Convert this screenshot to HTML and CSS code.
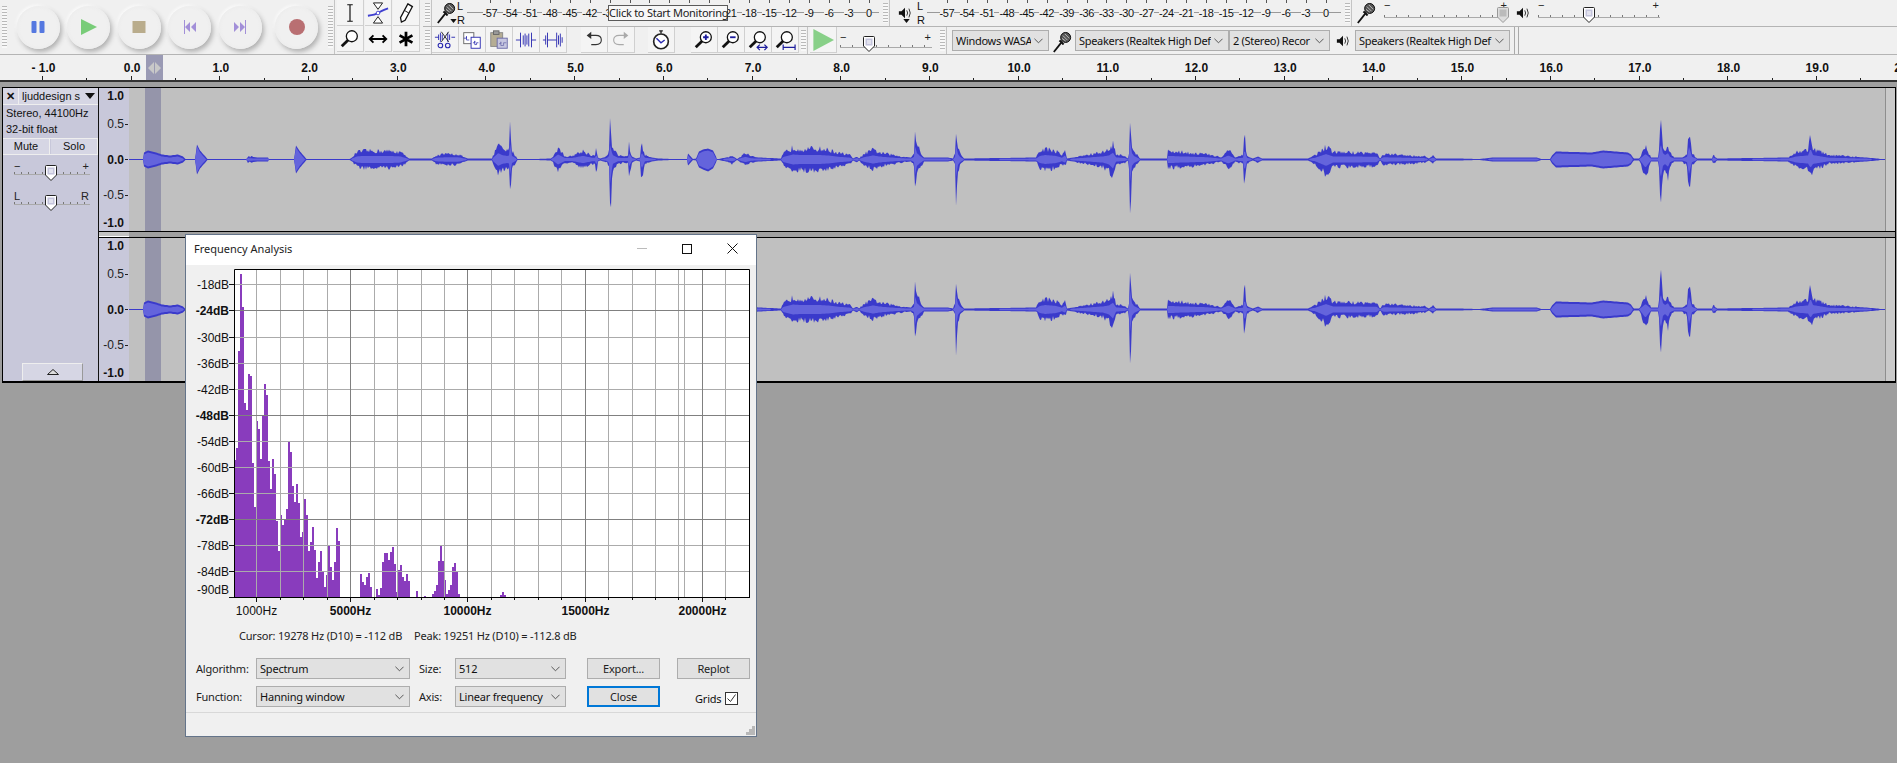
FILE: index.html
```html
<!DOCTYPE html>
<html lang="en">
<head>
<meta charset="utf-8">
<title>Audacity</title>
<link rel="stylesheet" href="styles.css">
</head>
<body>
<svg class="defs" aria-hidden="true">
  <symbol id="i-mic" viewBox="0 0 22 24"><g fill="none" stroke="#111"><path d="M10 13 2 23" stroke-width="2"/><path d="M8 11l4 4 1-1-4-4z" fill="#111"/></g><circle cx="15" cy="7" r="5.5" fill="#555" stroke="#000"/><path d="M12 5l5 5M14 3l5 5M11 8l4 3" stroke="#ddd" stroke-width=".8"/></symbol>
  <symbol id="i-spk" viewBox="0 0 16 16"><path d="M1 6h3l4-4v12l-4-4H1z" fill="#111"/><path d="M10 5q2 3 0 6M12.500 3q3 5 0 10" fill="none" stroke="#222"/></symbol>
  <symbol id="i-chev" viewBox="0 0 10 6"><path d="M.5.500 5 5 9.500.500" fill="none" stroke="#555" stroke-width="1.100"/></symbol>
  <symbol id="i-mag" viewBox="0 0 24 24"><circle cx="14" cy="9" r="6" fill="#fff" stroke="#111" stroke-width="1.400"/><path d="M10 13 3 20" stroke="#111" stroke-width="3"/></symbol>
  <symbol id="i-thumb" viewBox="0 0 12 16"><path d="M.5 1.500q0-1 1-1h9q1 0 1 1V10L6 15.500.5 10z" fill="#fff" stroke="#222"/><rect x="2.500" y="2.500" width="7" height="7" fill="#c4c4dc"/><path d="M4 5h4M4 7h4" stroke="#fff"/></symbol>
  <symbol id="i-thumb-off" viewBox="0 0 12 16"><path d="M.5 1.500q0-1 1-1h9q1 0 1 1V10L6 15.500.5 10z" fill="#ddd" stroke="#999"/><rect x="2.500" y="2.500" width="7" height="7" fill="#bbb"/></symbol>
  <symbol id="i-wave" viewBox="0 0 24 24"><path d="M1 9h4M5 6v6M7 4v10M9 6v6M15 4v10M17 6v6M19 9h4" stroke="#2a2ab0" fill="none"/></symbol>
</svg>

<div class="app">
  <header class="toolbars">
    <div class="transport">
      <div class="grip grip-tall"></div>
      <button class="tbtn"><svg viewBox="0 0 14 14" class="ticon"><rect x="0.500" y="1" width="5" height="12" rx="1" fill="#5578e0"/><rect x="8.500" y="1" width="5" height="12" rx="1" fill="#5578e0"/></svg></button>
      <button class="tbtn"><svg viewBox="0 0 16 16" class="ticon ticon-lg"><path d="M0 0l16 8L0 16z" fill="#78cc78"/></svg></button>
      <button class="tbtn"><svg viewBox="0 0 14 14" class="ticon"><rect x="0.500" y="1" width="13" height="12" fill="#b9ac8c"/></svg></button>
      <button class="tbtn"><svg viewBox="0 0 14 14" class="ticon"><path d="M1 0h1v14H1zM7 2v10L2 7zM13 2v10L8 7z" fill="#a28fd8"/></svg></button>
      <button class="tbtn"><svg viewBox="0 0 14 14" class="ticon"><path d="M12 0h1v14h-1zM7 2v10l5-5zM1 2v10l5-5z" fill="#a28fd8"/></svg></button>
      <button class="tbtn tbtn-rec"><svg viewBox="0 0 16 16" class="ticon ticon-lg"><circle cx="8" cy="8" r="8" fill="#b96f72"/></svg></button>
    </div>
    <div class="grip grip-tall"></div>
    <div class="tools">
      <button class="ibtn"><svg viewBox="0 0 24 24" class="icon"><path d="M9 3h6M12 3v18M9 21h6" stroke="#111" stroke-width="1.300" fill="none"/></svg></button>
      <button class="ibtn"><svg viewBox="0 0 24 24" class="icon"><path d="M7 1h10l-5 7zM7 23h10l-5-7z" fill="#fff" stroke="#111"/><path d="M1 15q8-1 11-3t11-5" stroke="#4040d0" stroke-width="2" fill="none"/><circle cx="12" cy="12" r="2" fill="#fff" stroke="#4040d0"/></svg></button>
      <button class="ibtn"><svg viewBox="0 0 24 24" class="icon"><path d="M14 2l5 3-8 15-4 2-1-5z" fill="#fff" stroke="#111" stroke-width="1.400"/><path d="M10 9l5 3" stroke="#111"/></svg></button>
      <button class="ibtn"><svg class="icon"><use href="#i-mag"/></svg></button>
      <button class="ibtn"><svg viewBox="0 0 24 24" class="icon"><path d="M3 12h18M7 8l-4 4 4 4M17 8l4 4-4 4" stroke="#000" stroke-width="2" fill="none"/></svg></button>
      <button class="ibtn"><svg viewBox="0 0 24 24" class="icon"><path d="M12 4v16M5 8l14 8M19 8 5 16" stroke="#000" stroke-width="3" fill="none"/></svg></button>
    </div>
    <div class="rows">
      <div class="row row-top">
        <div class="grip"></div>
        <div class="meter-icon meter-icon-rec"><svg class="mic"><use href="#i-mic"/></svg><svg viewBox="0 0 8 5" class="drop"><path d="M0 0h8L4 5z" fill="#111"/></svg><div class="lr"><span>L</span><span>R</span></div></div>
        <div class="meter meter-rec">
          <span class="mk"><i>-57</i></span><span class="mk"><i>-54</i></span><span class="mk"><i>-51</i></span><span class="mk"><i>-48</i></span><span class="mk"><i>-45</i></span><span class="mk"><i>-42</i></span><span class="mk"><i>-39</i></span><span class="mk"></span><span class="mk"></span><span class="mk"></span><span class="mk"></span><span class="mk"></span><span class="mk"><i>-21</i></span><span class="mk"><i>-18</i></span><span class="mk"><i>-15</i></span><span class="mk"><i>-12</i></span><span class="mk"><i>-9</i></span><span class="mk"><i>-6</i></span><span class="mk"><i>-3</i></span><span class="mk"><i>0</i></span>
        </div>
        <div class="grip"></div>
        <div class="meter-icon meter-icon-play"><svg class="spk"><use href="#i-spk"/></svg><svg viewBox="0 0 8 5" class="drop"><path d="M0 0h8L4 5z" fill="#111"/></svg><div class="lr"><span>L</span><span>R</span></div></div>
        <div class="meter meter-play">
          <span class="mk"><i>-57</i></span><span class="mk"><i>-54</i></span><span class="mk"><i>-51</i></span><span class="mk"><i>-48</i></span><span class="mk"><i>-45</i></span><span class="mk"><i>-42</i></span><span class="mk"><i>-39</i></span><span class="mk"><i>-36</i></span><span class="mk"><i>-33</i></span><span class="mk"><i>-30</i></span><span class="mk"><i>-27</i></span><span class="mk"><i>-24</i></span><span class="mk"><i>-21</i></span><span class="mk"><i>-18</i></span><span class="mk"><i>-15</i></span><span class="mk"><i>-12</i></span><span class="mk"><i>-9</i></span><span class="mk"><i>-6</i></span><span class="mk"><i>-3</i></span><span class="mk"><i>0</i></span>
        </div>
        <div class="grip"></div>
        <svg class="mix-mic"><use href="#i-mic"/></svg>
        <div class="slider slider-rec"><span class="sl-min">−</span><span class="sl-max">+</span><div class="sl-track"></div><svg class="thumb" style="left:113px"><use href="#i-thumb-off"/></svg></div>
        <svg class="mix-spk"><use href="#i-spk"/></svg>
        <div class="slider slider-play"><span class="sl-min">−</span><span class="sl-max">+</span><div class="sl-track"></div><svg class="thumb" style="left:45px"><use href="#i-thumb"/></svg></div>
      </div>
      <div class="row row-bottom">
        <div class="grip"></div>
        <button class="ibtn"><svg viewBox="0 0 24 24" class="icon"><use href="#i-wave" width="24" height="24"/><path d="M8 3l8 11M16 3 8 14" stroke="#222"/><circle cx="7" cy="18" r="2.500" fill="none" stroke="#2a2ab0" stroke-width="1.200"/><circle cx="15" cy="18" r="2.500" fill="none" stroke="#2a2ab0" stroke-width="1.200"/></svg></button>
        <button class="ibtn"><svg viewBox="0 0 24 24" class="icon"><rect x="3" y="4" width="11" height="12" fill="#fff" stroke="#666"/><rect x="11" y="9" width="10" height="12" fill="#fff" stroke="#2a2ab0"/><path d="M3 10h3v-2v4h3M13 15h2v-2v4h2v-2h2" fill="none" stroke="#2a2ab0" stroke-width=".8"/></svg></button>
        <button class="ibtn"><svg viewBox="0 0 24 24" class="icon"><rect x="3" y="4" width="13" height="15" fill="#b5ad94" stroke="#888"/><rect x="6" y="2" width="6" height="4" fill="#999" stroke="#666"/><rect x="10" y="10" width="11" height="11" fill="#c6c6e0" stroke="#6a6aa8"/><path d="M12 16h2v-2v4h3v-3h3" fill="none" stroke="#6a6aa8" stroke-width=".8"/></svg></button>
        <button class="ibtn"><svg viewBox="0 0 24 24" class="icon"><path d="M1 12h5M18 12h5M6 4v16M18 4v16M9 7v10M11 5v14M13 7v10M15 5v14" stroke="#2a2ab0" fill="none"/></svg></button>
        <button class="ibtn"><svg viewBox="0 0 24 24" class="icon"><path d="M1 12h3M4 7v10M6 4v16M6 12h10M16 4v16M18 7v10M20 5v14M22 9v6" stroke="#2a2ab0" fill="none"/></svg></button>
        <div class="spacer-14"></div>
        <button class="ibtn"><svg viewBox="0 0 24 24" class="icon"><path d="M7 7h7q6 0 6 5t-6 5H9" fill="none" stroke="#333" stroke-width="1.200"/><path d="M9 3 4 7l5 4z" fill="#333"/></svg></button>
        <button class="ibtn"><svg viewBox="0 0 24 24" class="icon"><path d="M17 7h-7q-6 0-6 5t6 5h5" fill="none" stroke="#aaa" stroke-width="1.200"/><path d="M15 3l5 4-5 4z" fill="#aaa"/></svg></button>
        <div class="spacer-13"></div>
        <button class="ibtn"><svg viewBox="0 0 24 24" class="icon"><circle cx="12" cy="13.500" r="8" fill="#fff" stroke="#222" stroke-width="1.800"/><path d="M10 2h4M12 2v3" stroke="#222" stroke-width="1.500"/><path d="M7 10l5 5 4-3" stroke="#2a2ab0" stroke-width="1.500" fill="none"/></svg></button>
        <div class="spacer-16"></div>
        <button class="ibtn"><svg viewBox="0 0 24 24" class="icon"><use href="#i-mag" width="24" height="24"/><path d="M11 9h6M14 6v6" stroke="#1c1c9c" stroke-width="2"/></svg></button>
        <button class="ibtn"><svg viewBox="0 0 24 24" class="icon"><use href="#i-mag" width="24" height="24"/><path d="M11 9h6" stroke="#1c1c9c" stroke-width="2"/></svg></button>
        <button class="ibtn"><svg viewBox="0 0 24 24" class="icon"><use href="#i-mag" width="24" height="24"/><path d="M11 20h11M14 17l-3 3 3 3M19 17l3 3-3 3" stroke="#1c1c9c" stroke-width="1.300" fill="none"/></svg></button>
        <button class="ibtn"><svg viewBox="0 0 24 24" class="icon"><use href="#i-mag" width="24" height="24"/><path d="M10 20h13M10 17v6M23 17v6" stroke="#1c1c9c" stroke-width="1.300" fill="none"/></svg></button>
        <div class="grip"></div>
        <button class="ibtn ibtn-play"><svg viewBox="0 0 16 16" class="icon"><path d="M1 0l15 8L1 16z" fill="#88d088"/></svg></button>
        <div class="slider slider-speed"><span class="sl-min">−</span><span class="sl-max">+</span><div class="sl-track"></div><svg class="thumb" style="left:23px"><use href="#i-thumb"/></svg></div>
        <div class="grip"></div>
        <div class="combo combo-host"><span>Windows WASA</span><svg class="chev"><use href="#i-chev"/></svg></div>
        <svg class="combo-mic"><use href="#i-mic"/></svg>
        <div class="combo combo-in"><span>Speakers (Realtek High Def</span><svg class="chev"><use href="#i-chev"/></svg></div>
        <div class="combo combo-ch"><span>2 (Stereo) Recor</span><svg class="chev"><use href="#i-chev"/></svg></div>
        <svg class="combo-spk"><use href="#i-spk"/></svg>
        <div class="combo combo-out"><span>Speakers (Realtek High Def</span><svg class="chev"><use href="#i-chev"/></svg></div>
        <div class="row-end"></div>
      </div>
    </div>
  </header>

  <div class="ruler">
    <span>- 1.0</span><span>0.0</span><span>1.0</span><span>2.0</span><span>3.0</span><span>4.0</span><span>5.0</span><span>6.0</span><span>7.0</span><span>8.0</span><span>9.0</span><span>10.0</span><span>11.0</span><span>12.0</span><span>13.0</span><span>14.0</span><span>15.0</span><span>16.0</span><span>17.0</span><span>18.0</span><span>19.0</span><span class="ruler-cut">20.0</span>
    <svg class="sel-mark" viewBox="0 0 17 25"><rect width="17" height="25" fill="#9a9ab4"/><path d="M8 7v12L2 13zM9 7v12l6-6z" fill="#c8c8c8"/></svg>
  </div>
  <div class="gutter"></div>

  <div class="tracks">
    <aside class="panel">
      <div class="panel-head"><span class="panel-x">✕</span><span class="panel-name">ljuddesign s<svg viewBox="0 0 10 6" class="panel-arrow"><path d="M0 0h10L5 6z" fill="#111"/></svg></span></div>
      <div class="panel-info">Stereo, 44100Hz<br>32-bit float</div>
      <div class="panel-btns"><span>Mute</span><span>Solo</span></div>
      <div class="slider slider-gain"><span class="sl-min">−</span><span class="sl-max">+</span><div class="sl-track"></div><svg class="thumb" style="left:31px"><use href="#i-thumb"/></svg></div>
      <div class="slider slider-pan"><span class="sl-min sl-text">L</span><span class="sl-max sl-text">R</span><div class="sl-track"></div><svg class="thumb" style="left:31px"><use href="#i-thumb"/></svg></div>
      <div class="panel-collapse"><svg viewBox="0 0 12 6"><path d="M6 .5 11.500 5.500H.5z" fill="#ddd" stroke="#222"/></svg></div>
    </aside>
    <div class="channels">
      <div class="channel">
        <svg class="vruler" viewBox="0 0 30 143"><text x="25" y="12" class="vb">1.0</text><text x="25" y="40">0.5</text><text x="25" y="75.500" class="vb">0.0</text><text x="25" y="111">-0.5</text><text x="25" y="139" class="vb">-1.0</text><path d="M26 36.500h3M26 71.500h3M26 107.500h3" stroke="#222"/></svg>
        <svg class="wave" viewBox="129 -71.500 1756 143" preserveAspectRatio="none"><rect x="145" y="-72" width="16" height="144" fill="#9595aa"/><path d="M129 0h1756" stroke="#3a3acb"/><path class="wave-peak" fill="#3a3acb"/><path class="wave-rms" fill="#6464dc"/></svg>
        <div class="end-strip"></div>
      </div>
      <div class="ch-gap"><div class="ch-gap-ruler"></div></div>
      <div class="channel">
        <svg class="vruler" viewBox="0 0 30 143"><text x="25" y="12" class="vb">1.0</text><text x="25" y="40">0.5</text><text x="25" y="75.500" class="vb">0.0</text><text x="25" y="111">-0.5</text><text x="25" y="139" class="vb">-1.0</text><path d="M26 36.500h3M26 71.500h3M26 107.500h3" stroke="#222"/></svg>
        <svg class="wave" viewBox="129 -71.500 1756 143" preserveAspectRatio="none"><rect x="145" y="-72" width="16" height="144" fill="#9595aa"/><path d="M129 0h1756" stroke="#3a3acb"/><path class="wave-peak" fill="#3a3acb"/><path class="wave-rms" fill="#6464dc"/></svg>
        <div class="end-strip"></div>
      </div>
    </div>
  </div>

  <div class="tooltip">Click to Start Monitoring</div>

  <section class="dialog">
    <div class="dlg-title">
      <span class="dlg-name">Frequency Analysis</span>
      <svg class="dlg-min" viewBox="0 0 10 1"><path d="M0 .5h10" stroke="#bbb"/></svg>
      <svg class="dlg-max" viewBox="0 0 10 10"><rect x=".5" y=".5" width="9" height="9" fill="none" stroke="#111"/></svg>
      <svg class="dlg-close" viewBox="0 0 11 11"><path d="M.5.5l10 10M10.500.5l-10 10" stroke="#111"/></svg>
    </div>
    <svg class="plot" viewBox="186 265 570 356">
      <rect x="234" y="269" width="516" height="328" fill="#fff"/>
      <path id="spectrum" fill="#893cbd"/>
      <path d="M256.500 269v328M280.500 269v328M303.500 269v328M327.500 269v328M374.500 269v328M397.500 269v328M421.500 269v328M444.500 269v328M491.500 269v328M514.500 269v328M538.500 269v328M561.500 269v328M608.500 269v328M632.500 269v328M655.500 269v328M678.500 269v328M684.500 269v328M725.500 269v328M234 284.500h516M234 337.500h516M234 363.500h516M234 389.500h516M234 441.500h516M234 467.500h516M234 493.500h516M234 545.500h516M234 571.500h516" stroke="#ababab" fill="none"/>
      <path d="M350.500 269v328M467.500 269v328M585.500 269v328M702.500 269v328M234 310.500h516M234 415.500h516M234 519.500h516" stroke="#808080" fill="none"/>
      <path d="M234.500 597V269.500H749.500V597M234 597.500h516" stroke="#000" fill="none"/>
      <path d="M229 284.500h5M229 310.500h5M229 337.500h5M229 363.500h5M229 389.500h5M229 415.500h5M229 441.500h5M229 467.500h5M229 493.500h5M229 519.500h5M229 545.500h5M229 571.500h5M229 597.500h5M256.500 598v4M280.500 598v2M303.500 598v2M327.500 598v2M350.500 598v4M374.500 598v2M397.500 598v2M421.500 598v2M444.500 598v2M467.500 598v4M491.500 598v2M514.500 598v2M538.500 598v2M561.500 598v2M585.500 598v4M608.500 598v2M632.500 598v2M655.500 598v2M678.500 598v2M702.500 598v4M725.500 598v2" stroke="#111" fill="none"/>
      <g class="db">
        <text x="229" y="289">-18dB</text><text x="229" y="315" class="b">-24dB</text><text x="229" y="342">-30dB</text><text x="229" y="368">-36dB</text><text x="229" y="394">-42dB</text><text x="229" y="420" class="b">-48dB</text><text x="229" y="446">-54dB</text><text x="229" y="472">-60dB</text><text x="229" y="498">-66dB</text><text x="229" y="524" class="b">-72dB</text><text x="229" y="550">-78dB</text><text x="229" y="576">-84dB</text><text x="229" y="594">-90dB</text>
      </g>
      <g class="hz">
        <text x="256.500" y="615">1000Hz</text><text x="350.500" y="615" class="b">5000Hz</text><text x="467.500" y="615" class="b">10000Hz</text><text x="585.500" y="615" class="b">15000Hz</text><text x="702.500" y="615" class="b">20000Hz</text>
      </g>
    </svg>
    <div class="dlg-info"><span>Cursor: 19278 Hz (D10) = -112 dB</span><span>Peak: 19251 Hz (D10) = -112.8 dB</span></div>
    <div class="dlg-controls">
      <label>Algorithm:</label>
      <div class="combo"><span>Spectrum</span><svg class="chev"><use href="#i-chev"/></svg></div>
      <label>Size:</label>
      <div class="combo"><span>512</span><svg class="chev"><use href="#i-chev"/></svg></div>
      <button class="dbtn">Export...</button>
      <button class="dbtn">Replot</button>
      <label>Function:</label>
      <div class="combo"><span>Hanning window</span><svg class="chev"><use href="#i-chev"/></svg></div>
      <label>Axis:</label>
      <div class="combo"><span>Linear frequency</span><svg class="chev"><use href="#i-chev"/></svg></div>
      <button class="dbtn dbtn-focus">Close</button>
      <div class="grids">Grids<svg viewBox="0 0 13 13" class="check"><rect x=".5" y=".5" width="12" height="12" fill="#fff" stroke="#333"/><path d="M2.500 6.500l3 3 5-7" fill="none" stroke="#333"/></svg></div>
    </div>
    <div class="dlg-foot"><svg class="dlg-grip" viewBox="0 0 9 9"><path d="M6 0h3v3H6zM3 3h3v3H3zM6 3h3v3H6zM0 6h3v3H0zM3 6h3v3H3zM6 6h3v3H6z" fill="#b8b8b8"/></svg></div>
  </section>
</div>
<script src="app.js"></script>
</body>
</html>
```
FILE: styles.css
```css
* { box-sizing: border-box; }
html, body { margin: 0; padding: 0; height: 100%; overflow: hidden; }
body { background: #9e9e9e; font-family: "Liberation Sans", Arial, sans-serif; font-size: 12px; color: #111; }
.defs { width: 0; height: 0; position: absolute; }
button { font: inherit; padding: 0; margin: 0; }
.app { position: relative; width: 1897px; height: 763px; overflow: hidden; }

/* toolbars */
.toolbars { display: flex; height: 55px; background: #f0f0f0; border-bottom: 1px solid #b4b4b4; }
.grip { flex: none; width: 9px; background: repeating-linear-gradient(to bottom, #b9b9b9 0 1px, #f8f8f8 1px 3px) center / 5px 78% no-repeat #f0f0f0; border-right: 1px solid #c4c4c4; }
.grip-tall { width: 9px; }
.transport { flex: none; width: 326px; display: flex; align-items: center; }
.transport .grip { align-self: stretch; margin-right: 4px; border-right: 0; }
.tbtn { flex: none; width: 43px; height: 43px; margin: 0 3.750px; border: 0; border-radius: 50%; background: radial-gradient(circle at 50% 50%, #f0f0f0 0 58%, #ededed 72%, #e0e0e0 100%); box-shadow: 2px 3px 5px #b0b0b0, -1px -1px 3px #fff; display: flex; align-items: center; justify-content: center; }
.tbtn-rec { margin-left: 9.750px; }
.ticon { width: 14px; height: 14px; }
.ticon-lg { width: 16px; height: 16px; }
.tools { flex: none; width: 86px; margin-left: 2px; display: grid; grid-template-columns: repeat(3, 28px); grid-template-rows: 26px 27px; }
.ibtn { flex: none; width: 27px; height: 26px; border: 0; border-right: 1px solid #d0d0d0; border-bottom: 1px solid #d0d0d0; background: #f4f4f4; display: flex; align-items: center; justify-content: center; }
.ibtn-play { margin-left: 2px; }
.icon { width: 22px; height: 22px; }
.rows { flex: 1; display: flex; flex-direction: column; min-width: 0; }
.row { display: flex; align-items: stretch; }
.row-top { height: 27px; border-bottom: 1px solid #b4b4b4; }
.row-bottom { height: 27px; align-items: stretch; }
.spacer-14 { width: 14px; flex: none; }
.spacer-13 { width: 13px; flex: none; }
.spacer-16 { width: 16px; flex: none; }

/* meters */
.meter-icon { flex: none; display: flex; align-items: center; position: relative; }
.meter-icon-rec { width: 35px; padding-left: 4px; }
.meter-icon-play { width: 37px; padding-left: 8px; }
.mic { width: 20px; height: 22px; }
.spk { width: 14px; height: 14px; margin-right: 1px; }
.drop { position: absolute; width: 7px; height: 4px; bottom: 3px; left: 18px; }
.meter-icon-play .drop { left: 13px; }
.lr { display: flex; flex-direction: column; justify-content: space-between; height: 100%; font-size: 11px; line-height: 12px; margin-left: auto; padding-right: 2px; }
.meter { flex: none; display: flex; font-size: 11px; letter-spacing: -.4px; height: 26px; align-items: center; background: linear-gradient(#999, #999) 0 12px / 100% 1px no-repeat; }
.meter-rec { width: 412px; padding-left: 13px; margin-right: 2px; }
.meter-play { width: 414px; padding-left: 10px; margin-right: 2px; }
.mk { flex: none; width: 19.950px; text-align: center; height: 26px; line-height: 26px; position: relative; }
.mk i { font-style: normal; background: #f0f0f0; }
.mk::before { content: ""; position: absolute; left: 50%; top: 0; width: 1px; height: 3px; background: #555; }

/* sliders */
.slider { flex: none; position: relative; height: 26px; }
.sl-min, .sl-max { position: absolute; top: -1px; font-size: 11px; line-height: 12px; color: #222; }
.sl-min { left: 0; }
.sl-max { right: 1px; }
.sl-track { position: absolute; left: 0; right: 0; top: 15px; height: 3px; border-bottom: 1px solid #aaa; background: repeating-linear-gradient(to right, #777 0 1px, transparent 1px 12px) 0 0 / 100% 2px no-repeat; }
.thumb { position: absolute; top: 7px; width: 12px; height: 16px; }
.slider-rec { width: 124px; margin-left: 3px; }
.slider-play { width: 122px; }
.slider-speed { width: 92px; margin: 0 6px 0 3px; top: 1px; }
.slider-speed .sl-min, .slider-speed .sl-max { top: 3px; }
.slider-speed .thumb { top: 8px; }
.slider-speed .sl-track { top: 17px; }
.mix-mic { flex: none; width: 20px; height: 22px; margin: 2px 5px 0 4px; }
.mix-spk { flex: none; width: 14px; height: 14px; margin: 6px 8px 0 8px; }

/* combos */
.combo { display: flex; align-items: center; background: #e1e1e1; border: 1px solid #adadad; height: 21px; padding: 0 5px 0 3px; font-family: "Noto Sans", sans-serif; font-size: 11px; letter-spacing: -.2px; overflow: hidden; min-width: 0; }
.combo span { flex: 1; overflow: hidden; white-space: nowrap; min-width: 0; }
.chev { flex: none; width: 9px; height: 6px; margin-left: 3px; }
.row-bottom .combo { align-self: center; letter-spacing: -.3px; }
.combo-host { flex: none; width: 97px; margin-left: 5px; }
.combo-mic { flex: none; width: 20px; height: 22px; margin: 2px 3px 0 3px; align-self: center; }
.combo-in { flex: none; width: 154px; }
.combo-ch { flex: none; width: 101px; }
.combo-spk { flex: none; width: 14px; height: 14px; margin: 0 5px 0 6px; align-self: center; }
.combo-out { flex: none; width: 155px; }
.row-end { flex: none; width: 5px; margin-left: 4px; border-left: 1px solid #aaa; border-right: 1px solid #aaa; }

/* timeline */
.ruler { position: relative; height: 27px; background: #f0f0f0; border-bottom: 2px solid #333; display: flex; overflow: hidden; font-weight: 700; font-size: 12px;
  background-image: repeating-linear-gradient(to right, #222 0 1px, transparent 1px 88.700px), repeating-linear-gradient(to right, #222 0 1px, transparent 1px 44.350px);
  background-size: 100% 4px, 100% 2px; background-position: 42px 100%, 42px 100%; background-repeat: no-repeat; }
.ruler span { flex: none; width: 88.700px; text-align: center; line-height: 26px; }
.ruler span:first-child { margin-left: -.850px; }
.sel-mark { position: absolute; left: 146px; top: 0; width: 17px; height: 25px; }
.gutter { height: 5px; background: #a0a0a0; }

/* tracks */
.tracks { display: flex; margin-left: 2px; width: 1894px; height: 296px; border: 1px solid #000; border-bottom-width: 2px; background: #c8c8da; }
.panel { flex: none; width: 96px; border-right: 1px solid #111; background: #c8c8da; display: flex; flex-direction: column; font-size: 11px; }
.panel-head { display: flex; height: 17px; border-bottom: 1px solid #eee; }
.panel-x { flex: none; width: 16px; text-align: center; line-height: 16px; font-size: 11px; font-weight: 700; border-right: 1px solid #eee; background: #d6d6e4; }
.panel-name { flex: 1; padding: 2px 3px; display: flex; justify-content: space-between; align-items: center; background: #d6d6e4; line-height: 13px; }
.panel-arrow { width: 10px; height: 6px; }
.panel-info { padding: 0 3px; line-height: 16px; height: 34px; border-bottom: 1px solid #eee; }
.panel-btns { display: flex; height: 16px; border-bottom: 1px solid #eee; gap: 1px; }
.panel-btns span { flex: 1; text-align: center; line-height: 15px; background: #d6d6e4; border-right: 1px solid #eee; }
.slider-gain, .slider-pan { width: 76px; margin-left: 11px; height: 30px; }
.slider-gain { margin-top: 3px; }
.slider-gain .sl-min, .slider-gain .sl-max, .slider-pan .sl-min, .slider-pan .sl-max { top: 2px; }
.slider-gain .sl-track, .slider-pan .sl-track { top: 14px; background-image: repeating-linear-gradient(to right, #777 0 1px, transparent 1px 7px); }
.slider-gain .thumb, .slider-pan .thumb { top: 7px; }
.panel-collapse { margin: auto 0 0 19px; width: 61px; height: 18px; background: #d6d6e4; border: 1px solid #eee; border-right-color: #999; border-bottom-color: #999; display: flex; align-items: center; justify-content: center; }
.panel-collapse svg { width: 12px; height: 6px; }
.channels { flex: 1; display: flex; flex-direction: column; min-width: 0; }
.channel { flex: 1; display: flex; min-height: 0; background: #c0c0c0; }
.vruler { flex: none; width: 30px; height: 100%; background: #c8c8da; font-size: 12px; }
.vruler text { text-anchor: end; fill: #222; }
.vruler .vb { font-weight: 700; fill: #111; }
.wave { flex: 1; min-width: 0; height: 100%; background: #c0c0c0; }
.end-strip { flex: none; width: 10px; background: #cacaca; border-left: 1px solid #8e8e8e; }
.ch-gap { flex: none; height: 7px; border-top: 1px solid #000; border-bottom: 1px solid #000; background: #a0a0a0; }
.ch-gap-ruler { width: 30px; height: 5px; background: #c2c2c2; border-bottom: 1px solid #fff; }

/* tooltip & dialog */
.tooltip { position: absolute; left: 608px; top: 5px; width: 120px; height: 16px; background: #f7f7f7; border: 1px solid #5a5a5a; font-family: "Noto Sans", sans-serif; font-size: 11px; letter-spacing: -.25px; line-height: 14px; text-align: center; white-space: nowrap; color: #222; }
.dialog { position: absolute; left: 185px; top: 234px; width: 572px; height: 503px; background: #f0f0f0; border: 1px solid #64748a; font-family: "Noto Sans", sans-serif; font-size: 11px; letter-spacing: -.2px; display: flex; flex-direction: column; }
.dlg-title { flex: none; height: 30px; background: #fff; display: flex; align-items: center; padding: 0 0 3px 8px; letter-spacing: 0; }
.dlg-name { flex: 1; font-size: 11px; color: #222; }
.dlg-min { width: 10px; height: 1px; margin-right: 35px; }
.dlg-max { width: 10px; height: 10px; margin-right: 35px; }
.dlg-close { width: 11px; height: 11px; margin-right: 18px; }
.plot { flex: none; width: 570px; height: 356px; font-family: "Liberation Sans", sans-serif; font-size: 12px; letter-spacing: 0; }
.plot .db text { text-anchor: end; fill: #111; }
.plot .hz text { text-anchor: middle; fill: #111; }
.plot .b { font-weight: 700; }
.dlg-info { flex: none; height: 28px; padding: 7px 0 0 53px; display: flex; gap: 12px; line-height: 15px; color: #222; white-space: nowrap; }
.dlg-controls { flex: none; display: grid; grid-template-columns: 60px 154px 45px 111px 94px 90px; grid-template-rows: 21px 21px; row-gap: 7px; padding-left: 10px; margin-top: 9px; align-items: center; }
.dlg-controls label { color: #222; }
.dlg-controls label:nth-of-type(even) { margin-left: 9px; }
.dlg-controls .dbtn { margin-left: 21px; width: 73px; }
.dlg-controls .dbtn + .dbtn { margin-left: 17px; }
.dbtn { height: 21px; background: #e1e1e1; border: 1px solid #adadad; font-family: "Noto Sans", sans-serif; font-size: 11px; letter-spacing: -.2px; color: #222; line-height: 17px; }
.dbtn-focus { border: 2px solid #0078d7; }
.grids { display: flex; align-items: center; gap: 4px; padding: 4px 0 0 18px; margin-left: 17px; }
.check { width: 13px; height: 13px; flex: none; }
.dlg-foot { flex: 1; margin-top: 5px; border-top: 1px solid #d8d8d8; display: flex; justify-content: flex-end; align-items: flex-end; }
.dlg-grip { width: 9px; height: 9px; margin: 0 1px 1px 0; }
```
FILE: app.js
```js
// Envelope of the waveform: [x, up, down]; down defaults to up.
var WAVE = [[129,0],[143,0],[144,7],[148,9],[156,7],[162,5],[170,4],[178,5],[183,3],[186,0],[195,0],[197,15],[200,9],[208,0],[246,0],[248,3],[258,2],[268,2],[269,0],[294,0],[296,14],[300,8],[307,0],[349,0],[352,2],[357,7],[365,8],[385,8],[400,7],[405,4],[409,1],[432,1],[436,4],[446,5],[458,5],[465,2],[468,1],[480,1],[492,1],[498,14],[502,10],[507,8],[509,9],[510,35,34],[512,8],[518,0],[551,1],[553,3],[558,11],[565,3],[571,3],[583,8],[592,4],[595,4],[596.5,11,12],[598,2],[600,1],[607,3],[609,8],[610,32,53],[612.6,10],[618,4],[625,3],[628,4],[628.6,15,17],[632,3],[636,1],[640,2],[641.6,15,21],[645,4],[652,2],[658,1],[687,0],[688,6],[693,0.5],[696,1],[699,8],[703,10],[708,11,12],[713,9],[716,3],[717,0],[730,3],[732,4],[737,0.5],[745.6,6],[750,3],[759,2],[781,1],[783.6,6],[792.5,11],[801,10],[819,10],[828,9],[839,6],[850.5,4],[853,1],[857,3],[859,1],[864,5],[873,9],[882,6],[900,3],[911,2],[914,6],[915,29,34],[917,14],[920,8],[924,2],[932,2],[940,2],[948,2],[953,1],[955,5],[956,31,39],[958,12],[960,6],[964,1],[1036,2],[1040,8],[1045,10],[1056,8],[1062,4],[1065,9,7],[1067,1],[1091.6,5],[1103,7],[1109,9,11],[1113,15,20],[1116,5],[1125,3],[1128,1],[1129,8],[1129.5,50,58],[1132,14],[1134,8],[1140,1],[1167,1],[1168,8],[1180,7],[1207,5],[1221,2],[1228.5,9],[1235,2],[1243,4],[1244.5,22,25],[1247,4],[1250,2],[1253,1],[1258,3],[1262,1],[1308,1],[1315,4],[1326,12,14],[1333,7],[1376.6,6],[1380,1],[1383.5,5],[1424.6,3],[1429,1],[1433,4],[1436,1],[1457,1],[1479.5,0.5],[1493,2],[1537,2],[1541,0.5],[1550,0.5],[1552,4],[1556,8],[1591.5,7],[1603,9],[1628,7],[1631,5],[1633.6,1],[1639.5,1],[1645.5,12,18],[1651,2],[1658,2],[1659,8],[1660.6,36,43],[1663,14],[1665,10],[1668,14,16],[1670,6],[1674,2],[1682,2],[1687,6],[1689,28,32],[1692,6],[1697,1],[1712,1],[1712.7,5],[1717,1],[1788,2],[1797,7],[1808,9],[1810.5,24,18],[1813,10],[1818,8],[1829,4],[1847.5,3],[1866,2],[1877,1],[1885,0]];
var SMOOTH = [[143,210],[294,308],[1548,1634],[680,720]];

// Peaks of the spectrum: [x, y] in page coordinates.
var SPEC = [[234,460],[236,448],[237.3,402],[238.3,330],[239.3,282],[240.3,269],[241.7,282],[242.3,331],[243.7,400],[245,408],[246.7,410],[247.7,377],[249,366],[250.3,380],[251.3,418],[252.3,483],[254,507],[255.3,423],[257.3,416],[258,430],[259.3,452],[260.7,468],[262.3,402],[264.3,382],[265.7,385],[267,430],[268,460],[269,478],[270,490],[270.7,507],[271.7,460],[273.3,458],[274.3,480],[275.7,510],[276.7,543],[277.3,565],[278.3,543],[279.3,518],[281,508],[282,525],[283.3,525],[286,508],[287.3,447],[288.7,437],[290,453],[291.7,480],[293.3,507],[296,483],[297.3,490],[299.3,527],[300.7,547],[302.3,530],[304.3,493],[305.7,508],[306.7,528],[308.3,557],[310.7,537],[312.3,523],[313.7,545],[316,577],[318.3,558],[320.3,550],[322,573],[324,588],[325.3,590],[327.3,550],[328.7,541],[330.3,573],[332,580],[334,563],[336,527],[338.3,543],[340,597],[358,597],[359,577],[361,573],[362.7,590],[364.3,583],[365.7,577],[367.7,570],[370,587],[371.3,597],[374.3,597],[375.3,590],[376.7,590],[378.7,595],[381,582],[382,563],[384,552],[386,553],[387.7,560],[390.7,550],[392.3,546],[394,565],[396,593],[398.3,568],[400.7,565],[402.7,583],[405,577],[406.7,573],[408.7,587],[410,597],[414,597],[414.7,590],[416.7,590],[417.3,597],[422,597],[422.7,585],[424.3,597],[431.7,597],[432.7,591],[435,591],[436.7,580],[438.3,557],[440,546],[442.3,563],[445,590],[446.7,595],[450,585],[452,567],[454.3,563],[456.7,577],[458.3,597],[750,597]];

var seed = 12345;
function rnd() { seed = (seed * 16807) % 2147483647; return seed / 2147483647; }

function lerp(a, b, t) { return a + (b - a) * t; }

function isSmooth(x) {
  return SMOOTH.some(function (r) { return x >= r[0] && x <= r[1]; });
}

function buildWave() {
  var top = [], bottom = [], rTop = [], rBottom = [], i = 0;
  for (var x = 129; x <= 1885; x++) {
    while (i < WAVE.length - 2 && WAVE[i + 1][0] < x) i++;
    var a = WAVE[i], b = WAVE[i + 1];
    var t = Math.min(1, Math.max(0, (x - a[0]) / (b[0] - a[0])));
    var up = lerp(a[1], b[1], t);
    var down = lerp(a[2] === undefined ? a[1] : a[2], b[2] === undefined ? b[1] : b[2], t);
    var smooth = isSmooth(x), j = 1, k = 1;
    if (!smooth && up > 2.5) { j = 0.75 + 0.6 * rnd(); k = 0.75 + 0.6 * rnd(); }
    top.push([x, -up * j]);
    bottom.push([x, down * k]);
    var ru = smooth ? Math.max(0, up - 2) : up * 0.45;
    var rd = smooth ? Math.max(0, down - 2) : down * 0.45;
    if (up < 1.5) { ru = 0; rd = 0; }
    rTop.push([x, -ru]);
    rBottom.push([x, rd]);
  }
  function poly(t, b) {
    var s = "";
    t.forEach(function (p, n) { s += (n ? "L" : "M") + p[0] + " " + p[1].toFixed(1); });
    for (var n = b.length - 1; n >= 0; n--) s += "L" + b[n][0] + " " + b[n][1].toFixed(1);
    return s + "Z";
  }
  return { peak: poly(top, bottom), rms: poly(rTop, rBottom) };
}

function buildSpectrum() {
  var s = "M234 597", i = 0;
  for (var x = 234; x < 460; x += 2) {
    while (i < SPEC.length - 2 && SPEC[i + 1][0] < x) i++;
    var a = SPEC[i], b = SPEC[i + 1];
    var t = Math.min(1, Math.max(0, (x - a[0]) / (b[0] - a[0])));
    var y = lerp(a[1], b[1], t);
    if (y < 596) y += (rnd() - 0.5) * 3;
    y = Math.max(269, Math.min(597, y));
    s += "V" + y.toFixed(0) + "H" + (x + 2);
  }
  return s + "V597Z" + "M500 597V595H502V592H504V595H506V597Z";
}

var wave = buildWave();
document.querySelectorAll(".wave-peak").forEach(function (p) { p.setAttribute("d", wave.peak); });
document.querySelectorAll(".wave-rms").forEach(function (p) { p.setAttribute("d", wave.rms); });
document.getElementById("spectrum").setAttribute("d", buildSpectrum());
```
